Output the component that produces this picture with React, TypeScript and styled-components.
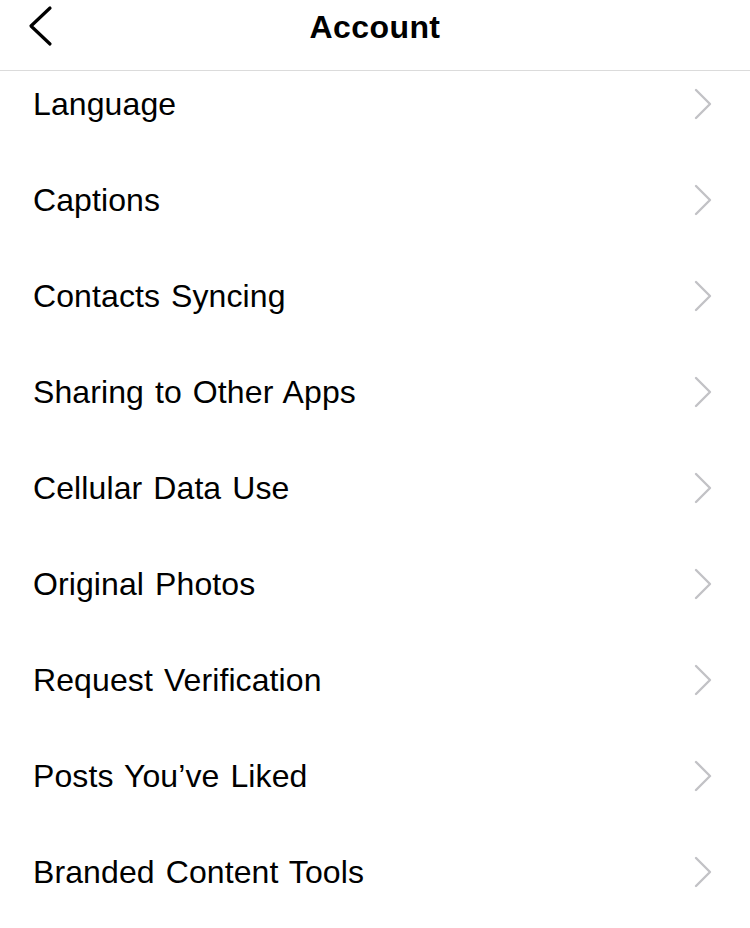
import styled, { createGlobalStyle } from "styled-components";

const GlobalStyle = createGlobalStyle`
  html, body {
    margin: 0;
    padding: 0;
    background: #ffffff;
  }
  body {
    font-family: "Liberation Sans", Arial, sans-serif;
    color: #000000;
  }
`;

const Screen = styled.div`
  width: 750px;
  height: 928px;
  overflow: hidden;
  background: #ffffff;
`;

const Header = styled.header`
  position: relative;
  height: 71px;
  border-bottom: 1px solid #dbdbdb;
  display: flex;
  justify-content: center;
  align-items: flex-start;
  padding-top: 7px;
  box-sizing: border-box;
`;

const BackButton = styled.button`
  position: absolute;
  left: 24px;
  top: 4px;
  width: 32px;
  height: 44px;
  padding: 0;
  border: 0;
  background: none;
  cursor: pointer;
  display: flex;
  align-items: center;
  justify-content: center;
`;

const Title = styled.h1`
  margin: 0;
  font-size: 32px;
  line-height: 40px;
  font-weight: 700;
  letter-spacing: 0.4px;
`;

const List = styled.ul`
  list-style: none;
  margin: 0;
  padding: 0;
`;

const Row = styled.li`
  height: 96px;
  display: flex;
  align-items: flex-start;
  justify-content: space-between;
  padding: 13px 38px 0 33px;
  box-sizing: border-box;
  cursor: pointer;
`;

const Label = styled.span`
  font-size: 32px;
  line-height: 40px;
  word-spacing: 2px;
  letter-spacing: 0.1px;
  color: #000000;
`;

const Chevron = styled.svg`
  margin-top: 4px;
  flex-shrink: 0;
`;

const items = [
  "Language",
  "Captions",
  "Contacts Syncing",
  "Sharing to Other Apps",
  "Cellular Data Use",
  "Original Photos",
  "Request Verification",
  "Posts You\u2019ve Liked",
  "Branded Content Tools",
];

const App = () => {
  return (
    <Screen>
      <GlobalStyle />
      <Header>
        <BackButton aria-label="Back">
          <svg width="28" height="42" viewBox="0 0 28 42">
            <path
              d="M24 3 L5 21 L24 39"
              fill="none"
              stroke="#000"
              strokeWidth="3.2"
              strokeLinecap="round"
              strokeLinejoin="round"
            />
          </svg>
        </BackButton>
        <Title>Account</Title>
      </Header>
      <List>
        {items.map((item) => (
          <Row key={item}>
            <Label>{item}</Label>
            <Chevron width="18" height="32" viewBox="0 0 18 32">
              <path
                d="M2 2 L16 16 L2 30"
                fill="none"
                stroke="#c2c2c6"
                strokeWidth="2.4"
                strokeLinecap="round"
                strokeLinejoin="round"
              />
            </Chevron>
          </Row>
        ))}
      </List>
    </Screen>
  );
};

export default App;
